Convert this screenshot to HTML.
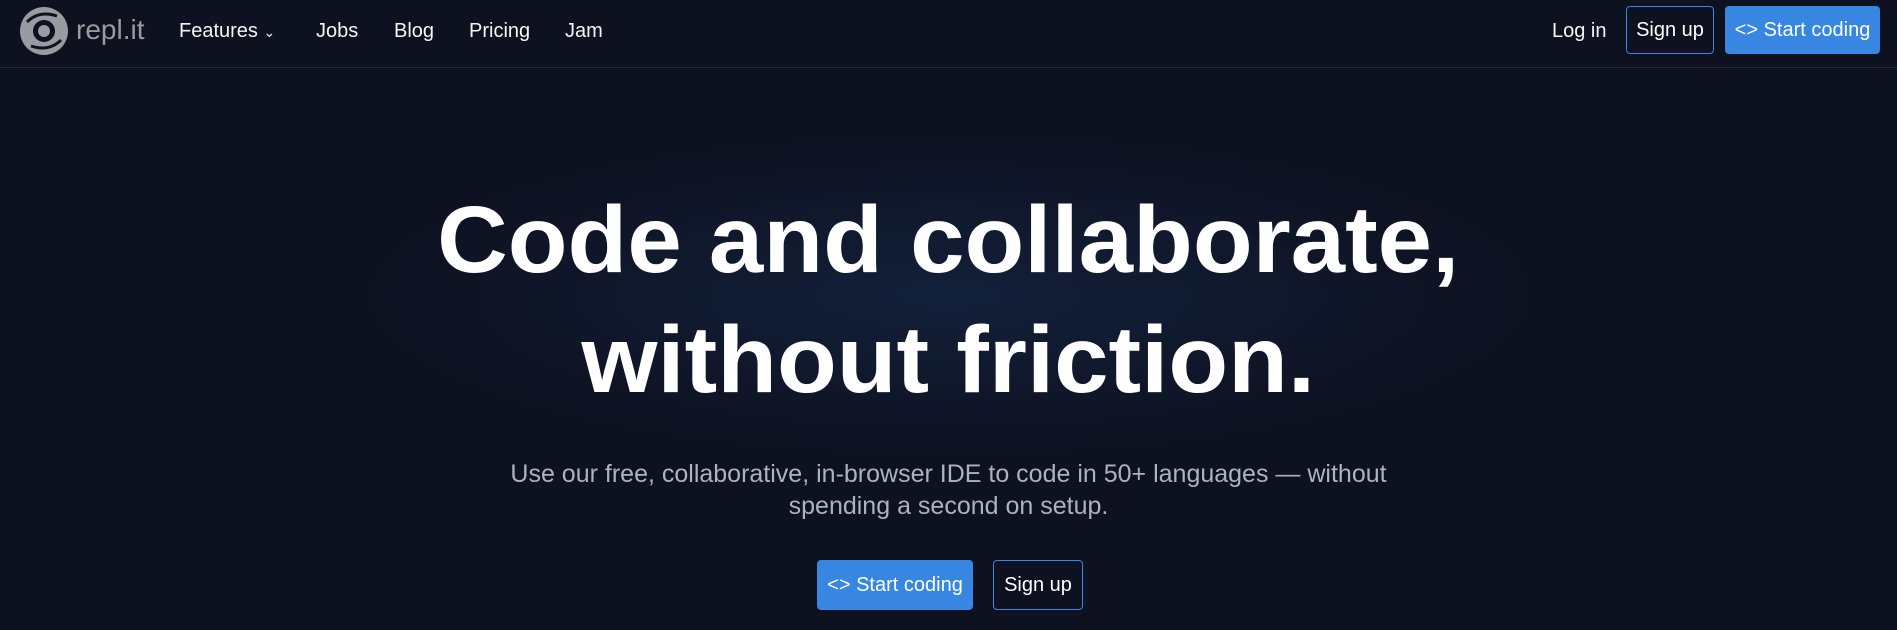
<!DOCTYPE html>
<html><head><meta charset="utf-8"><style>
*{margin:0;padding:0;box-sizing:border-box}
html,body{width:1897px;height:630px;overflow:hidden;background:#0e1120;font-family:"Liberation Sans",sans-serif;color:#fff}
.glow{position:absolute;left:350px;top:130px;width:1200px;height:330px;background:radial-gradient(ellipse at center,#12203a 0%,rgba(14,17,32,0) 70%)}
nav{position:absolute;left:0;top:0;width:1897px;height:68px;border-bottom:1px solid #262a38;background:#0e1120}
.a{position:absolute;top:20px;font-size:20px;color:#f5f5f5}
.btn{position:absolute;border-radius:4px;font-size:20px;display:flex;align-items:center;justify-content:center;color:#fff}
.blue{background:#3786e2}
.out{border:1px solid #3786e2}
.h{position:absolute;left:0;width:1897px;text-align:center;font-weight:bold;font-size:95px;line-height:1}
.h span{display:inline-block;transform:scaleX(1.03);white-space:nowrap}
.sub{position:absolute;left:0;width:1897px;text-align:center;font-size:25px;color:#aeb2bc;line-height:32px}
</style></head><body>
<div class="glow"></div>
<nav>
<svg style="position:absolute;left:19px;top:6px" width="50" height="50" viewBox="0 0 50 50"><circle cx="25" cy="25" r="24" fill="#9a9ba0"/><circle cx="25" cy="25" r="11" fill="#0e1120"/><circle cx="25" cy="25" r="6" fill="#9a9ba0"/><path d="M8 16 Q20 4 38 10" stroke="#0e1120" stroke-width="3" fill="none"/><path d="M42 34 Q30 46 12 40" stroke="#0e1120" stroke-width="3" fill="none"/></svg>
<div class="a" style="left:76px;top:14px;font-size:28px;color:#9a9ba0">repl.it</div>
<div class="a" style="left:179px">Features <span style="font-size:14px">&#8964;</span></div>
<div class="a" style="left:316px">Jobs</div>
<div class="a" style="left:394px">Blog</div>
<div class="a" style="left:469px">Pricing</div>
<div class="a" style="left:565px">Jam</div>
<div class="a" style="left:1552px">Log in</div>
<div class="btn out" style="left:1626px;top:6px;width:88px;height:48px">Sign up</div>
<div class="btn blue" style="left:1725px;top:6px;width:155px;height:48px">&lt;&gt;&nbsp;Start coding</div>
</nav>
<div class="h" style="top:193px"><span>Code and collaborate,</span></div>
<div class="h" style="top:313px"><span>without friction.</span></div>
<div class="sub" style="top:458px">Use our free, collaborative, in-browser IDE to code in 50+ languages — without<br>spending a second on setup.</div>
<div class="btn blue" style="left:817px;top:560px;width:156px;height:50px">&lt;&gt;&nbsp;Start coding</div>
<div class="btn out" style="left:993px;top:560px;width:90px;height:50px">Sign up</div>
</body></html>
